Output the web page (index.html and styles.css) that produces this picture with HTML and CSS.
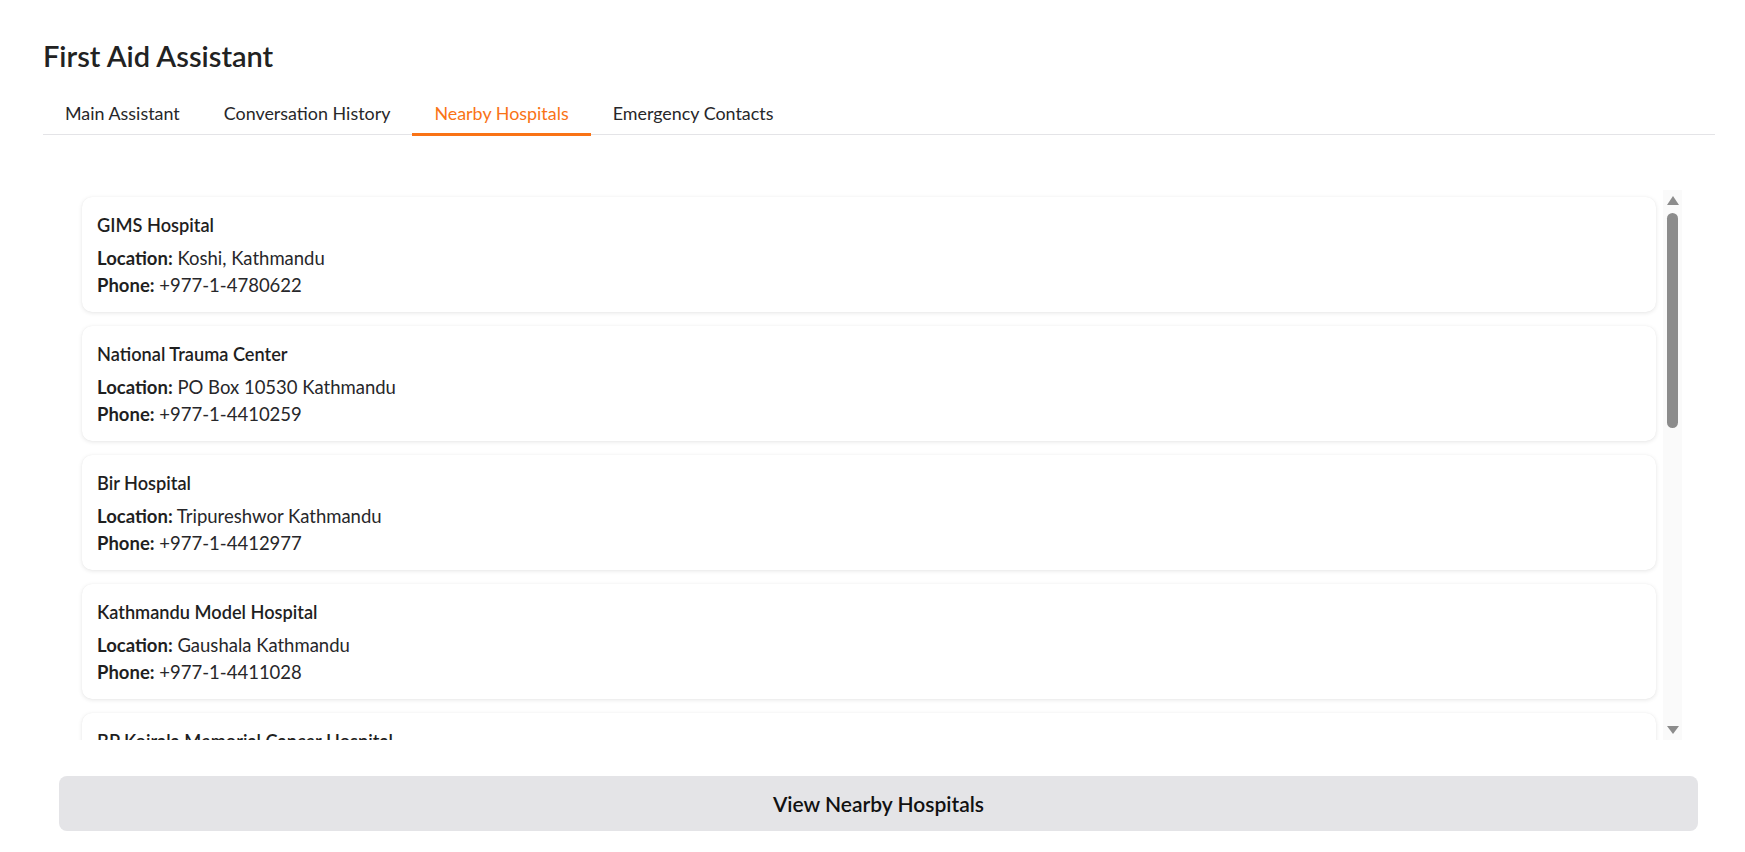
FILE: index.html
```html
<!DOCTYPE html>
<html lang="en">
<head>
<meta charset="utf-8">
<title>First Aid Assistant</title>
<link rel="stylesheet" href="styles.css">
</head>
<body>
<div class="app">
  <h1 class="title">First Aid Assistant</h1>
  <div class="tabs">
    <button class="tab">Main Assistant</button>
    <button class="tab">Conversation History</button>
    <button class="tab active">Nearby Hospitals</button>
    <button class="tab">Emergency Contacts</button>
  </div>
  <div class="panel">
    <div class="viewport">
      <div class="list">
        <div class="card">
          <div class="name">GIMS Hospital</div>
          <div class="row"><b>Location:</b> Koshi, Kathmandu</div>
          <div class="row"><b>Phone:</b> +977-1-4780622</div>
        </div>
        <div class="card">
          <div class="name">National Trauma Center</div>
          <div class="row"><b>Location:</b> PO Box 10530 Kathmandu</div>
          <div class="row"><b>Phone:</b> +977-1-4410259</div>
        </div>
        <div class="card">
          <div class="name">Bir Hospital</div>
          <div class="row"><b>Location:</b> Tripureshwor Kathmandu</div>
          <div class="row"><b>Phone:</b> +977-1-4412977</div>
        </div>
        <div class="card">
          <div class="name">Kathmandu Model Hospital</div>
          <div class="row"><b>Location:</b> Gaushala Kathmandu</div>
          <div class="row"><b>Phone:</b> +977-1-4411028</div>
        </div>
        <div class="card">
          <div class="name">BP Koirala Memorial Cancer Hospital</div>
          <div class="row"><b>Location:</b> Bharatpur, Chitwan</div>
          <div class="row"><b>Phone:</b> +977-56-524501</div>
        </div>
      </div>
    </div>
    <div class="scrollbar">
      <div class="arrow-up"></div>
      <div class="thumb"></div>
      <div class="arrow-down"></div>
    </div>
  </div>
  <button class="action">View Nearby Hospitals</button>
</div>
</body>
</html>
```

FILE: styles.css
```css
* { box-sizing: border-box; }
html, body { margin: 0; padding: 0; background: #ffffff; }
body {
  font-family: "Lato", "Open Sans", sans-serif;
  color: #27272a;
  font-size: 18.5px;
}
.app {
  padding: 36px 30px 0 43px;
  display: flex;
  flex-direction: column;
}
.title {
  margin: 0;
  font-size: 29px;
  line-height: 39px;
  font-weight: 600;
  color: #222222;
}
.tabs {
  display: flex;
  margin-top: 17px;
  border-bottom: 1px solid #e4e4e7;
}
.tab {
  position: relative;
  background: none;
  border: none;
  font-family: inherit;
  font-size: 17.9px;
  line-height: 27px;
  color: #27272a;
  padding: 8px 22px 7px 22px;
  cursor: pointer;
}
.tab.active { color: #f97316; }
.tab.active::after {
  content: "";
  position: absolute;
  left: 0;
  right: 0;
  bottom: -2px;
  height: 3px;
  background: #f97316;
}
.panel {
  margin: 55px 0 0 25px;
  width: 1614px;
  height: 550px;
  display: flex;
}
.viewport {
  flex: 1;
  overflow: hidden;
}
.scrollbar {
  width: 19px;
  flex: none;
  background: #fafafa;
  display: flex;
  flex-direction: column;
  align-items: center;
  padding: 6px 0;
}
.arrow-up {
  width: 0;
  height: 0;
  border-left: 6px solid transparent;
  border-right: 6px solid transparent;
  border-bottom: 9px solid #8c8c8c;
}
.thumb {
  width: 11px;
  height: 215px;
  margin-top: 8px;
  border-radius: 6px;
  background: #8c8c8c;
}
.arrow-down {
  margin-top: auto;
  width: 0;
  height: 0;
  border-left: 6px solid transparent;
  border-right: 6px solid transparent;
  border-top: 8px solid #8c8c8c;
}
.list {
  display: flex;
  flex-direction: column;
  gap: 14px;
  padding: 7px 7px 7px 14px;
}
.card {
  flex: none;
  background: #ffffff;
  border-radius: 10px;
  box-shadow: 0 1px 4px rgba(0, 0, 0, 0.10), 0 0 1px rgba(0, 0, 0, 0.06);
  padding: 15px 14px 13px 15px;
  height: 115px;
}
.name {
  font-size: 18.2px;
  font-weight: 600;
  line-height: 27px;
  margin-bottom: 6px;
  color: #1f1f1f;
}
.row {
  line-height: 27px;
}
.row b { font-weight: 700; color: #1f1f1f; }
.action {
  margin: 36px 17px 0 16px;
  height: 55px;
  border: none;
  border-radius: 8px;
  background: #e4e4e7;
  font-family: inherit;
  font-size: 21px;
  font-weight: 600;
  color: #111111;
  cursor: pointer;
}
```
